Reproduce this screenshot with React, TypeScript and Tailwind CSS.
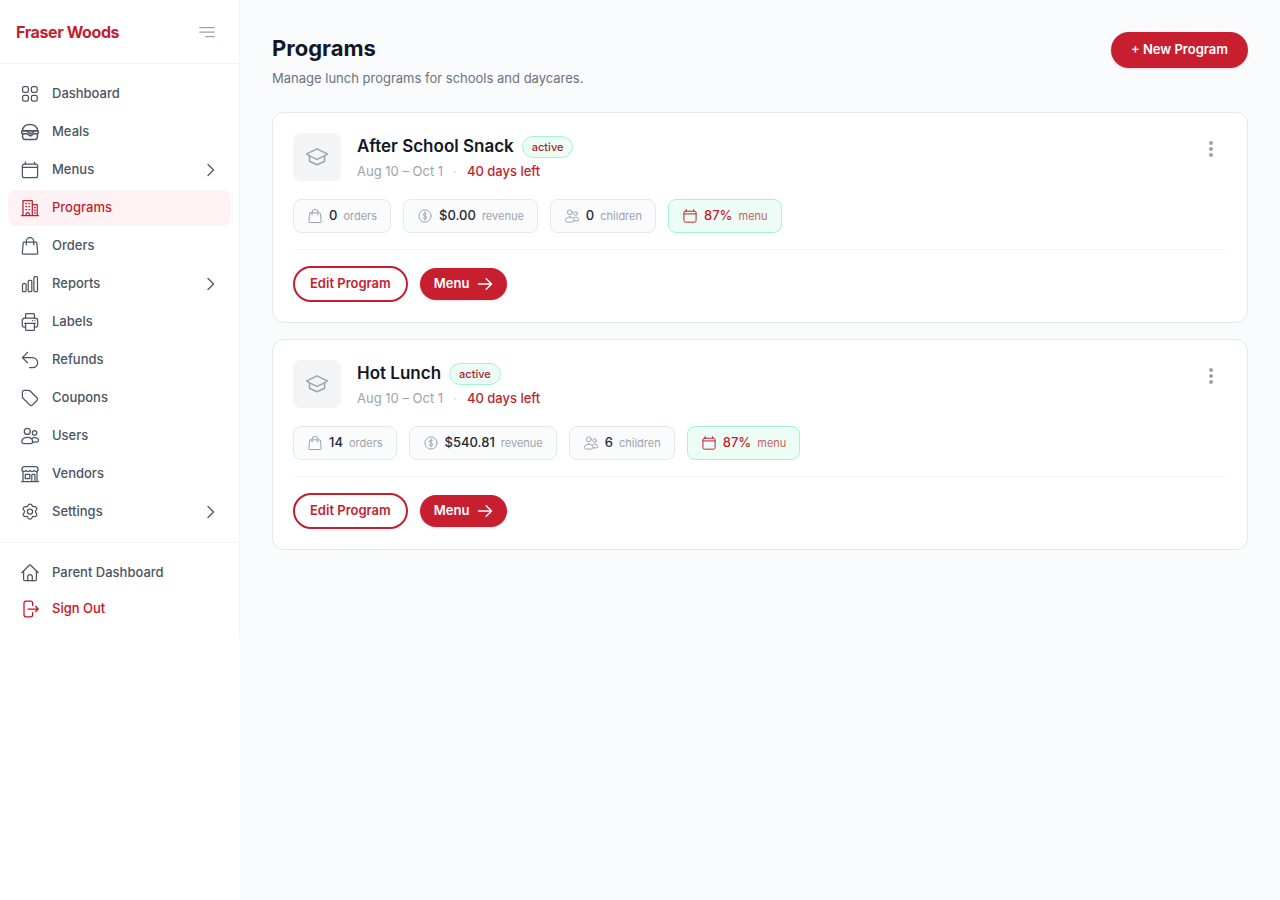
import type { ReactNode } from 'react';
import clsx from 'clsx';

type IconName = keyof typeof icons;

const icons = {
    dashboard: (
        <>
            <rect x="2.6" y="2.6" width="5.8" height="5.8" rx="1.7" />
            <rect x="11.4" y="2.6" width="5.8" height="5.8" rx="1.7" />
            <rect x="2.6" y="11.4" width="5.8" height="5.8" rx="1.7" />
            <rect x="11.4" y="11.4" width="5.8" height="5.8" rx="1.7" />
        </>
    ),
    burger: (
        <g strokeWidth="1.5">
            <path d="M2.4 8.8C2.6 4.8 5.8 2.4 10 2.4s7.4 2.4 7.6 6.4z" />
            <path d="M3 8.8h14c1.8 0 1.8 3 0 3h-3.4L10.700 14 7.2 11.800H3c-1.800 0-1.800-3 0-3z" />
            <path d="M6.600 9l4.100 2.800L14.700 9" />
            <path d="M2.600 12.500v2.500a2.400 2.400 0 0 0 2.400 2.400h10a2.400 2.400 0 0 0 2.400-2.400v-2.500" />
        </g>
    ),
    calendar: (
        <>
            <rect x="2.4" y="4" width="15.2" height="13.7" rx="2" />
            <path d="M2.4 7.4h15.2M5.4 2v2M14.6 2v2" />
        </>
    ),
    building: (
        <>
            <path d="M1.5 17.700h17M3 17.700V2.600h9.300v15.100M12.300 6.700h4.900v11M6 17.700v-1.500a1.700 1.700 0 0 1 3.400 0v1.500" />
            <path d="M5.700 5.500h.8M8.800 5.500h.8M5.700 8.500h.8M8.800 8.500h.8M5.700 11.500h.8M8.800 11.500h.8M14.500 9.500h.8M14.500 12.200h.8M14.500 14.900h.8" />
        </>
    ),
    bag: (
        <>
            <path d="M4 6.100h12a.8.8 0 0 1 .8.7l.9 10.500a.8.8 0 0 1-.8.9H3.100a.8.8 0 0 1-.8-.9l.9-10.500a.8.8 0 0 1 .8-.7z" />
            <path d="M6.300 8.800V5.300a3.700 3.700 0 0 1 7.400 0v3.500" />
        </>
    ),
    bars: (
        <>
            <rect x="2.500" y="9.700" width="3.600" height="8" rx="1" />
            <rect x="8.200" y="6.300" width="3.600" height="11.400" rx="1" />
            <rect x="13.900" y="2.700" width="3.600" height="15" rx="1" />
        </>
    ),
    printer: (
        <>
            <path d="M5.600 6V2.500a.8.8 0 0 1 .8-.8h7.200a.8.8 0 0 1 .8.8V6" />
            <path d="M5.600 15H4a1.700 1.700 0 0 1-1.700-1.700V8.500A2.500 2.500 0 0 1 4.800 6h10.400a2.500 2.500 0 0 1 2.500 2.500v4.800A1.700 1.700 0 0 1 16 15h-1.600" />
            <path d="M4.700 11.300h10.600M5.600 11.300v6.100a.9.9 0 0 0 .9.9h7a.9.9 0 0 0 .9-.9v-6.100M12.500 8.600h.1M14.900 8.600h.1" />
        </>
    ),
    undo: <path d="M7.500 12.700 2.400 7.600l5.100-5.100M2.400 7.600h10.200a5 5 0 0 1 0 10.100h-3" />,
    tag: (
        <>
            <path d="M4.200 2.400h4.500c.6 0 1.100.2 1.500.6l6.700 6.700c.8.8.8 2 0 2.800l-4.400 4.400c-.8.8-2 .8-2.800 0L3 10.200c-.4-.4-.6-.9-.6-1.500V4.200c0-1 .8-1.800 1.800-1.800z" />
            <path d="M5.300 5.300h.1" strokeOpacity=".4" />
        </>
    ),
    users: (
        <>
            <circle cx="7.300" cy="5.400" r="3" />
            <circle cx="14.600" cy="6.900" r="2.200" />
            <path d="M7.300 11.300c3 0 5.400 1.900 5.400 4.200 0 1.500-1 2.100-2.100 2.100H4c-1.200 0-2.200-.6-2.200-2.100 0-2.300 2.500-4.200 5.500-4.200z" />
            <path d="M11.900 12.400c.8-.6 1.700-.8 2.700-.8 2.200 0 3.900 1.300 3.900 2.900 0 1-.7 1.500-1.600 1.500h-4.100" />
        </>
    ),
    store: (
        <>
            <path d="M4.500 2.600h11c1.600 0 2.600 1.300 2.600 2.900 0 1.300-.9 2-1.900 2s-1.700-.5-2.100-1.200c-.4.7-1.100 1.200-2 1.200s-1.700-.5-2.100-1.200c-.4.7-1.200 1.200-2.100 1.200s-1.600-.5-2-1.200c-.4.7-1.100 1.200-2.100 1.200s-1.900-.7-1.900-2c0-1.600 1-2.900 2.600-2.900z" />
            <path d="M3 7.600v10.100M17 7.600v10.100M1.600 17.700h16.800M5.300 10.300h4.500v4.400H5.300zM11.800 17.700v-6.600c0-.5.3-.8.8-.8h1.500c.5 0 .8.3.8.8v6.600" />
        </>
    ),
    gear: (
        <>
            <path d="M8 3.300c.3-.8 1-1.200 2-1.200s1.700.4 2 1.200l.2.600c.2.600.9.900 1.500.8l.7-.1c.8-.1 1.500.2 2 .9.5.8.5 1.600 0 2.300l-.5.600c-.5.600-.5 1.800 0 2.400l.5.600c.5.700.5 1.500 0 2.300-.5.700-1.200 1-2 .9l-.7-.1c-.6-.1-1.300.2-1.500.8l-.2.600c-.3.800-1 1.200-2 1.200s-1.700-.4-2-1.200l-.2-.6c-.2-.6-.9-.9-1.500-.8l-.7.1c-.8.1-1.500-.2-2-.9-.5-.8-.5-1.600 0-2.300l.5-.6c.5-.6.5-1.800 0-2.400l-.5-.6c-.5-.7-.5-1.500 0-2.300.5-.7 1.200-1 2-.9l.7.1c.6.1 1.300-.2 1.500-.8z" />
            <circle cx="10" cy="9.600" r="2.600" />
        </>
    ),
    home: (
        <>
            <path d="M1.800 9.700 9.300 2.300a1 1 0 0 1 1.400 0l7.500 7.400" />
            <path d="M3.600 8.200v8.300c0 .7.500 1.200 1.200 1.200h10.400c.7 0 1.200-.5 1.200-1.200V8.200" />
            <path d="M7.700 17.700v-3.900a2.300 2.300 0 0 1 4.600 0v3.900" />
        </>
    ),
    signOut: (
        <>
            <path d="M12.600 6.500V3.900a1.700 1.700 0 0 0-1.700-1.700H5.700A1.700 1.700 0 0 0 4 3.900v12.200a1.700 1.700 0 0 0 1.700 1.700h5.200a1.700 1.700 0 0 0 1.700-1.700v-2.600" />
            <path d="M8 10h10.200M15.500 7.300l2.700 2.700-2.700 2.700" />
        </>
    ),
    dollar: (
        <>
            <circle cx="10" cy="10" r="7.600" />
            <path d="M12.300 7.600c-.4-.7-1.200-1.100-2.300-1.100-1.300 0-2.300.6-2.300 1.700 0 2.400 4.600 1.200 4.600 3.600 0 1.100-1 1.700-2.300 1.700-1.100 0-2-.4-2.400-1.200M10 5v10" />
        </>
    ),
    cap: (
        <>
            <path d="M10 3.200 18.600 7.400 16.300 9.100 10 12 3.700 9.100 1.400 7.400z" />
            <path d="M3.700 9.100v4.400L10 16.500l6.300-3V9.100" />
        </>
    ),
    chevron: <path d="M9 4.500 14.600 10 9 15.500" />,
    arrow: <path d="M1.800 10h16.400M11.500 3.300l6.700 6.700-6.700 6.700" strokeWidth="1.8" />,
    collapse: <path d="M2.700 5.500h14.600M2.700 10h14.600M8.700 14.500h8.600" />,
};

interface IconProps {
    name: IconName;
    className?: string;
}

function Icon({ name, className = 'size-5' }: IconProps) {
    return (
        <svg
            viewBox="0 0 20 20"
            fill="none"
            stroke="currentColor"
            strokeWidth="1.25"
            strokeLinecap="round"
            strokeLinejoin="round"
            aria-hidden="true"
            className={clsx('shrink-0', className)}
        >
            {icons[name]}
        </svg>
    );
}

const navItems: { label: string; icon: IconName; expandable?: boolean }[] = [
    { label: 'Dashboard', icon: 'dashboard' },
    { label: 'Meals', icon: 'burger' },
    { label: 'Menus', icon: 'calendar', expandable: true },
    { label: 'Programs', icon: 'building' },
    { label: 'Orders', icon: 'bag' },
    { label: 'Reports', icon: 'bars', expandable: true },
    { label: 'Labels', icon: 'printer' },
    { label: 'Refunds', icon: 'undo' },
    { label: 'Coupons', icon: 'tag' },
    { label: 'Users', icon: 'users' },
    { label: 'Vendors', icon: 'store' },
    { label: 'Settings', icon: 'gear', expandable: true },
];

const programs = [
    { name: 'After School Snack', dates: 'Aug 10 – Oct 1', left: '40 days left', orders: '0', revenue: '$0.00', children: '0', menu: '87%' },
    { name: 'Hot Lunch', dates: 'Aug 10 – Oct 1', left: '40 days left', orders: '14', revenue: '$540.81', children: '6', menu: '87%' },
];

const navRow = 'flex h-9 w-full items-center gap-3 rounded-lg px-3 text-[13px] font-medium';

function Sidebar() {
    const active = 'Programs';

    return (
        <aside className="w-60 shrink-0 bg-white">
            <div className="border-r border-gray-100 pb-3">
                <div className="flex h-16 items-center justify-between border-b border-gray-100 pl-4 pr-[22px]">
                    <a href="#" className="text-base font-bold tracking-tight text-[#c41e30]">Fraser Woods</a>
                    <button type="button" aria-label="Collapse sidebar" className="text-[#9ca3af]">
                        <Icon name="collapse" />
                    </button>
                </div>

                <nav className="flex flex-col gap-0.5 px-2 py-3">
                    {navItems.map((item) =>
                        item.expandable ? (
                            <button key={item.label} type="button" className={clsx(navRow, 'text-[#4b5563]')}>
                                <Icon name={item.icon} />
                                <span className="flex-1 text-left">{item.label}</span>
                                <Icon name="chevron" />
                            </button>
                        ) : (
                            <a
                                key={item.label}
                                href="#"
                                className={clsx(navRow, item.label === active ? 'bg-[#fef2f4] text-[#c41e30]' : 'text-[#4b5563]')}
                            >
                                <Icon name={item.icon} />
                                {item.label}
                            </a>
                        )
                    )}
                </nav>

                <div className="border-t border-gray-100 px-2 pt-3">
                    <a href="#" className={clsx(navRow, 'text-[#4b5563]')}>
                        <Icon name="home" />
                        Parent Dashboard
                    </a>
                    <button type="button" className={clsx(navRow, 'text-[#d00d20]')}>
                        <Icon name="signOut" />
                        Sign Out
                    </button>
                </div>
            </div>
        </aside>
    );
}

interface StatProps {
    icon: IconName;
    value: string;
    label: string;
    highlight?: boolean;
}

function Stat({ icon, value, label, highlight }: StatProps) {
    return (
        <div
            className={clsx(
                'flex h-[34px] items-center gap-1.5 rounded-lg border px-[13px]',
                highlight ? 'border-emerald-200 bg-emerald-50 text-[#c41e30]' : 'border-gray-200 bg-[#f9fbfc] text-[#1f2937]'
            )}
        >
            <Icon name={icon} className={clsx('size-4', !highlight && 'text-[#9ca3af]')} />
            <span className="text-[13px] font-medium">{value}</span>
            <span className={clsx('text-[11px]', highlight ? 'opacity-75' : 'text-[#9ca3af]')}>{label}</span>
        </div>
    );
}

function Card({ children }: { children: ReactNode }) {
    return <article className="rounded-xl border border-gray-200 bg-white p-5">{children}</article>;
}

function ProgramCard({ program }: { program: typeof programs[0] }) {
    return (
        <Card>
            <div className="flex items-start gap-4">
                <div className="flex size-12 shrink-0 items-center justify-center rounded-lg bg-gray-100 text-[#9ca3af]">
                    <Icon name="cap" className="size-6" />
                </div>
                <div className="flex-1">
                    <div className="flex h-7 items-center gap-2">
                        <h2 className="text-[17px] font-semibold text-[#111827]">{program.name}</h2>
                        <span className="flex h-[22px] items-center rounded-full border border-emerald-200 bg-emerald-50 px-[9px] text-[11px] font-medium text-[#a81c2c]">
                            active
                        </span>
                    </div>
                    <p className="flex h-[22px] items-center gap-2.5 text-[13px] text-[#9ca3af]">
                        {program.dates}
                        <span className="text-gray-300">·</span>
                        <span className="font-medium text-[#c41e30]">{program.left}</span>
                    </p>
                </div>
                <button type="button" aria-label={`Options for ${program.name}`} className="flex size-8 items-center justify-center text-[#9ca3af]">
                    <svg viewBox="0 0 20 20" fill="currentColor" className="size-5" aria-hidden="true">
                        <circle cx="10" cy="4" r="2" />
                        <circle cx="10" cy="10" r="2" />
                        <circle cx="10" cy="16" r="2" />
                    </svg>
                </button>
            </div>

            <div className="mt-4 flex flex-wrap gap-3">
                <Stat icon="bag" value={program.orders} label="orders" />
                <Stat icon="dollar" value={program.revenue} label="revenue" />
                <Stat icon="users" value={program.children} label="children" />
                <Stat icon="calendar" value={program.menu} label="menu" highlight />
            </div>

            <div className="mt-4 flex items-center gap-3 border-t border-gray-100 pt-4">
                <button type="button" className="h-9 rounded-full border-2 border-[#c41e30] px-[15px] text-[13px] font-semibold text-[#c41e30]">
                    Edit Program
                </button>
                <a href="#" className="flex h-8 items-center gap-2 rounded-full bg-[#c71f30] px-3.5 text-[13px] font-semibold text-white shadow-sm">
                    Menu
                    <Icon name="arrow" className="size-4" />
                </a>
            </div>
        </Card>
    );
}

export default function App() {
    return (
        <div className="flex min-h-screen bg-[#f9fbfc] font-['Inter',sans-serif]">
            <Sidebar />
            <main className="flex-1 p-8">
                <header className="flex items-start justify-between">
                    <div>
                        <h1 className="text-[22px] leading-8 font-bold text-[#111827]">Programs</h1>
                        <p className="mt-1 text-[13px] leading-5 text-[#6b7280]">Manage lunch programs for schools and daycares.</p>
                    </div>
                    <button type="button" className="h-9 rounded-full bg-[#c71f30] px-5 text-[13px] font-semibold text-white shadow-sm">
                        + New Program
                    </button>
                </header>

                <div className="mt-6 flex flex-col gap-4">
                    {programs.map((program) => (
                        <ProgramCard key={program.name} program={program} />
                    ))}
                </div>
            </main>
        </div>
    );
}
